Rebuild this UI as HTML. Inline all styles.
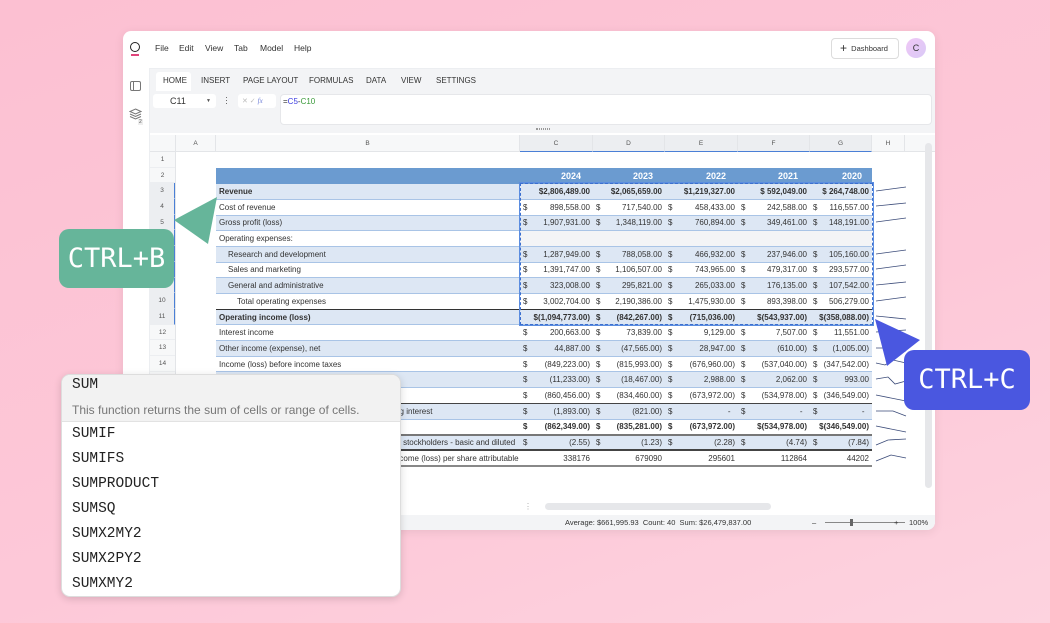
<!DOCTYPE html>
<html><head><meta charset="utf-8"><style>
*{box-sizing:border-box;margin:0;padding:0}
body{width:1050px;height:623px;overflow:hidden;background:linear-gradient(160deg,#fcc0d2 0%,#fdc8d8 60%,#fdd3df 100%);font-family:"Liberation Sans",sans-serif;position:relative;color:#333}
.abs{position:absolute}
.win{left:123px;top:31px;width:812px;height:499px;background:#fff;border-radius:8px;box-shadow:0 2px 10px rgba(0,0,0,.08);overflow:hidden}
.menu span{position:absolute;top:12px;font-size:8.5px;color:#333}
.ribbon{left:27px;top:37px;width:785px;height:65px;background:#f3f4f6;border-top:1px solid #eceef1}
.side{left:0;top:37px;width:27px;height:462px;background:#fff;border-right:1px solid #eceef1}
.tab{position:absolute;top:7px;font-size:8px;color:#333}
table{border-collapse:collapse;table-layout:fixed;font-size:8px}
td{height:15.7px;padding:0 3px;white-space:nowrap;overflow:hidden;border-bottom:1px solid #a9c4e6}
tr.b td{background:#dde7f4}
tr.w td{background:#fff}
.nm{display:flex;justify-content:space-between}
.bold td{font-weight:bold}
.rh div{height:15.7px;font-size:6.5px;color:#555;text-align:center;line-height:15.7px;border-bottom:1px solid #eceef1}
.ch{font-size:6.5px;color:#555;text-align:center;line-height:17px;position:absolute;top:0;height:17px;border-right:1px solid #e3e5e8}
.pop{left:61px;top:374px;width:340px;height:223px;background:#fff;border-radius:9px;box-shadow:0 2px 8px rgba(0,0,0,.15);border:1px solid #ddd;overflow:hidden}
.pop .it{position:absolute;left:10px;font-family:"Liberation Mono",monospace;font-size:14.5px;color:#222}
</style></head><body>
<div class="abs win">
  <div class="abs" style="left:7px;top:11px;width:10px;height:10px;border:1.6px solid #222;border-radius:50%"></div>
  <div class="abs" style="left:8px;top:23px;width:8px;height:1.5px;background:#e0457b"></div>
  <div class="menu"><span style="left:32px">File</span><span style="left:56px">Edit</span><span style="left:82px">View</span><span style="left:111px">Tab</span><span style="left:137px">Model</span><span style="left:171px">Help</span></div>
  <div class="abs" style="left:708px;top:7px;width:68px;height:21px;border:1px solid #dcdcdc;border-radius:4px;font-size:7.5px;line-height:19px;color:#333;padding-left:8px"><span style="font-size:12px;vertical-align:-1px">+</span>&nbsp; Dashboard</div>
  <div class="abs" style="left:783px;top:7px;width:20px;height:20px;border-radius:50%;background:linear-gradient(135deg,#f0c8f5,#d9c9f7);font-size:9px;text-align:center;line-height:20px;color:#333">C</div>
  <div class="abs side">
    <div class="abs" style="left:7px;top:13px;width:11px;height:10px;border:1.2px solid #777;border-radius:2px"></div>
    <div class="abs" style="left:10px;top:13px;width:1px;height:10px;background:#777"></div>
    <svg class="abs" style="left:6px;top:40px" width="13" height="13" viewBox="0 0 13 13" fill="none" stroke="#777" stroke-width="1"><path d="M6.5 1L12 3.5 6.5 6 1 3.5z"/><path d="M1 6l5.5 2.5L12 6"/><path d="M1 8.5l5.5 2.5L12 8.5"/></svg>
    <div class="abs" style="left:15px;top:51px;font-size:5px;color:#555;background:#eee;padding:0 1px">2</div>
  </div>
  <div class="abs ribbon">
    <div class="abs" style="left:6px;top:3px;width:35px;height:19px;background:#fff;border-radius:3px 3px 0 0"></div>
    <span class="tab" style="left:13px">HOME</span><span class="tab" style="left:51px">INSERT</span><span class="tab" style="left:93px">PAGE LAYOUT</span><span class="tab" style="left:159px">FORMULAS</span><span class="tab" style="left:216px">DATA</span><span class="tab" style="left:251px">VIEW</span><span class="tab" style="left:286px">SETTINGS</span>
    <div class="abs" style="left:3px;top:25px;width:63px;height:14px;background:#fff;border-radius:3px;font-size:9px;line-height:14px;padding-left:17px">C11<span style="position:absolute;left:53px;font-size:5px;color:#555">▼</span></div>
    <div class="abs" style="left:75px;top:27px;font-size:9px;color:#555;line-height:3px">·<br>·<br>·</div>
    <div class="abs" style="left:88px;top:25px;width:38px;height:14px;background:#fff;border-radius:3px;font-size:7px;line-height:14px;color:#bbb;padding-left:4px">✕ ✓ <i style="color:#6a7bd6;font-family:'Liberation Serif',serif">fx</i></div>
    <div class="abs" style="left:130px;top:25px;width:652px;height:31px;background:#fff;border-radius:4px;border:1px solid #e6e7ea;font-size:8px;padding:2px 0 0 2px">=<span style="color:#3a3ae0">C5</span>-<span style="color:#3a9a3a">C10</span></div>
    <div class="abs" style="left:386px;top:59px;width:14px;height:2px;border-top:1px dotted #999;border-bottom:1px dotted #999"></div>
  </div>
  <div class="abs" style="left:27px;top:104px;width:785px;height:17px;background:#f7f8f9;border-bottom:1px solid #e3e5e8">
    <div class="ch" style="left:0;width:26px"></div>
    <div class="ch" style="left:26px;width:40px">A</div>
    <div class="ch" style="left:66px;width:304px">B</div>
    <div class="ch" style="left:370px;width:73px;background:#eceef1;border-bottom:1.5px solid #4a7fd6">C</div>
    <div class="ch" style="left:443px;width:72px;background:#eceef1;border-bottom:1.5px solid #4a7fd6">D</div>
    <div class="ch" style="left:515px;width:73px;background:#eceef1;border-bottom:1.5px solid #4a7fd6">E</div>
    <div class="ch" style="left:588px;width:72px;background:#eceef1;border-bottom:1.5px solid #4a7fd6">F</div>
    <div class="ch" style="left:660px;width:62px;background:#eceef1;border-bottom:1.5px solid #4a7fd6">G</div>
    <div class="ch" style="left:722px;width:33px">H</div>
  </div>
  <div class="abs rh" style="left:27px;top:121px;width:26px;background:#f7f8f9;border-right:1px solid #e3e5e8;height:340px">
    <div>1</div><div>2</div><div style="background:#eceef1;border-right:1.5px solid #4a7fd6">3</div><div style="background:#eceef1;border-right:1.5px solid #4a7fd6">4</div><div style="background:#eceef1;border-right:1.5px solid #4a7fd6">5</div><div style="background:#eceef1;border-right:1.5px solid #4a7fd6">6</div><div style="background:#eceef1;border-right:1.5px solid #4a7fd6">7</div><div style="background:#eceef1;border-right:1.5px solid #4a7fd6">8</div><div style="background:#eceef1;border-right:1.5px solid #4a7fd6">9</div><div style="background:#eceef1;border-right:1.5px solid #4a7fd6">10</div><div style="background:#eceef1;border-right:1.5px solid #4a7fd6">11</div><div>12</div><div>13</div><div>14</div><div>15</div><div>16</div><div>17</div><div>18</div><div>19</div><div>20</div><div></div>
  </div>
  <div class="abs" style="left:802px;top:112px;width:7px;height:345px;background:#e6e7ea;border-radius:4px"></div>
  <div class="abs" style="left:422px;top:472px;width:226px;height:7px;background:#e6e7ea;border-radius:4px"></div>
  <div class="abs" style="left:401px;top:471px;font-size:8px;color:#aaa">⋮</div>
  <div class="abs" style="left:27px;top:484px;width:785px;height:15px;background:#f3f4f6;font-size:7.5px;line-height:15px;color:#333">
    <span class="abs" style="left:415px">Average: $661,995.93 &nbsp;Count: 40 &nbsp;Sum: $26,479,837.00</span>
    <span class="abs" style="left:662px">–</span>
    <div class="abs" style="left:675px;top:7px;width:80px;height:1px;background:#888"></div>
    <div class="abs" style="left:700px;top:4px;width:3px;height:7px;background:#666"></div>
    <span class="abs" style="left:744px">+</span><span class="abs" style="left:759px">100%</span>
  </div>
  <table class="abs" style="left:93px;top:137px;width:656px">
    <colgroup><col style="width:304px"><col style="width:73px"><col style="width:72px"><col style="width:73px"><col style="width:72px"><col style="width:62px"></colgroup>
    <tr style="background:#6b9bd0;color:#fff;font-weight:bold;font-size:9px"><td style="border:0"></td><td style="text-align:right;padding-right:12px;border:0">2024</td><td style="text-align:right;padding-right:12px;border:0">2023</td><td style="text-align:right;padding-right:12px;border:0">2022</td><td style="text-align:right;padding-right:12px;border:0">2021</td><td style="text-align:right;padding-right:10px;border:0">2020</td></tr>
    <tr class="b bold"><td>Revenue</td><td style="text-align:right">$2,806,489.00</td><td style="text-align:right">$2,065,659.00</td><td style="text-align:right">$1,219,327.00</td><td style="text-align:right">$ 592,049.00</td><td style="text-align:right">$ 264,748.00</td></tr>
    <tr class="w"><td>Cost of revenue</td><td><div class="nm"><span>$</span><span>898,558.00</span></div></td><td><div class="nm"><span>$</span><span>717,540.00</span></div></td><td><div class="nm"><span>$</span><span>458,433.00</span></div></td><td><div class="nm"><span>$</span><span>242,588.00</span></div></td><td><div class="nm"><span>$</span><span>116,557.00</span></div></td></tr>
    <tr class="b"><td>Gross profit (loss)</td><td><div class="nm"><span>$</span><span>1,907,931.00</span></div></td><td><div class="nm"><span>$</span><span>1,348,119.00</span></div></td><td><div class="nm"><span>$</span><span>760,894.00</span></div></td><td><div class="nm"><span>$</span><span>349,461.00</span></div></td><td><div class="nm"><span>$</span><span>148,191.00</span></div></td></tr>
    <tr class="w"><td>Operating expenses:</td><td style="background:#f3f4f6"></td><td style="background:#f3f4f6"></td><td style="background:#f3f4f6"></td><td style="background:#f3f4f6"></td><td style="background:#f3f4f6"></td></tr>
    <tr class="b"><td style="padding-left:12px">Research and development</td><td><div class="nm"><span>$</span><span>1,287,949.00</span></div></td><td><div class="nm"><span>$</span><span>788,058.00</span></div></td><td><div class="nm"><span>$</span><span>466,932.00</span></div></td><td><div class="nm"><span>$</span><span>237,946.00</span></div></td><td><div class="nm"><span>$</span><span>105,160.00</span></div></td></tr>
    <tr class="w"><td style="padding-left:12px">Sales and marketing</td><td><div class="nm"><span>$</span><span>1,391,747.00</span></div></td><td><div class="nm"><span>$</span><span>1,106,507.00</span></div></td><td><div class="nm"><span>$</span><span>743,965.00</span></div></td><td><div class="nm"><span>$</span><span>479,317.00</span></div></td><td><div class="nm"><span>$</span><span>293,577.00</span></div></td></tr>
    <tr class="b"><td style="padding-left:12px">General and administrative</td><td><div class="nm"><span>$</span><span>323,008.00</span></div></td><td><div class="nm"><span>$</span><span>295,821.00</span></div></td><td><div class="nm"><span>$</span><span>265,033.00</span></div></td><td><div class="nm"><span>$</span><span>176,135.00</span></div></td><td><div class="nm"><span>$</span><span>107,542.00</span></div></td></tr>
    <tr class="w"><td style="padding-left:21px;border-bottom:1.5px solid #333">Total operating expenses</td><td style="border-bottom:1.5px solid #333"><div class="nm"><span>$</span><span>3,002,704.00</span></div></td><td style="border-bottom:1.5px solid #333"><div class="nm"><span>$</span><span>2,190,386.00</span></div></td><td style="border-bottom:1.5px solid #333"><div class="nm"><span>$</span><span>1,475,930.00</span></div></td><td style="border-bottom:1.5px solid #333"><div class="nm"><span>$</span><span>893,398.00</span></div></td><td style="border-bottom:1.5px solid #333"><div class="nm"><span>$</span><span>506,279.00</span></div></td></tr>
    <tr class="b bold"><td>Operating income (loss)</td><td style="text-align:right">$(1,094,773.00)</td><td><div class="nm"><span>$</span><span>(842,267.00)</span></div></td><td><div class="nm"><span>$</span><span>(715,036.00)</span></div></td><td style="text-align:right">$(543,937.00)</td><td style="text-align:right">$(358,088.00)</td></tr>
    <tr class="w"><td>Interest income</td><td><div class="nm"><span>$</span><span>200,663.00</span></div></td><td><div class="nm"><span>$</span><span>73,839.00</span></div></td><td><div class="nm"><span>$</span><span>9,129.00</span></div></td><td><div class="nm"><span>$</span><span>7,507.00</span></div></td><td><div class="nm"><span>$</span><span>11,551.00</span></div></td></tr>
    <tr class="b"><td>Other income (expense), net</td><td><div class="nm"><span>$</span><span>44,887.00</span></div></td><td><div class="nm"><span>$</span><span>(47,565.00)</span></div></td><td><div class="nm"><span>$</span><span>28,947.00</span></div></td><td><div class="nm"><span>$</span><span>(610.00)</span></div></td><td><div class="nm"><span>$</span><span>(1,005.00)</span></div></td></tr>
    <tr class="w"><td>Income (loss) before income taxes</td><td><div class="nm"><span>$</span><span>(849,223.00)</span></div></td><td><div class="nm"><span>$</span><span>(815,993.00)</span></div></td><td><div class="nm"><span>$</span><span>(676,960.00)</span></div></td><td><div class="nm"><span>$</span><span>(537,040.00)</span></div></td><td><div class="nm"><span>$</span><span>(347,542.00)</span></div></td></tr>
    <tr class="b"><td>Provision for (benefit from) income taxes</td><td><div class="nm"><span>$</span><span>(11,233.00)</span></div></td><td><div class="nm"><span>$</span><span>(18,467.00)</span></div></td><td><div class="nm"><span>$</span><span>2,988.00</span></div></td><td><div class="nm"><span>$</span><span>2,062.00</span></div></td><td><div class="nm"><span>$</span><span>993.00</span></div></td></tr>
    <tr class="w"><td style="border-bottom:1.5px solid #444">Net income (loss)</td><td style="border-bottom:1.5px solid #444"><div class="nm"><span>$</span><span>(860,456.00)</span></div></td><td style="border-bottom:1.5px solid #444"><div class="nm"><span>$</span><span>(834,460.00)</span></div></td><td style="border-bottom:1.5px solid #444"><div class="nm"><span>$</span><span>(673,972.00)</span></div></td><td style="border-bottom:1.5px solid #444"><div class="nm"><span>$</span><span>(534,978.00)</span></div></td><td style="border-bottom:1.5px solid #444"><div class="nm"><span>$</span><span>(346,549.00)</span></div></td></tr>
    <tr class="b"><td>Less: net income (loss) attributable to noncontrolling interest</td><td><div class="nm"><span>$</span><span>(1,893.00)</span></div></td><td><div class="nm"><span>$</span><span>(821.00)</span></div></td><td><div class="nm"><span>$</span><span>-&nbsp;&nbsp;</span></div></td><td><div class="nm"><span>$</span><span>-&nbsp;&nbsp;</span></div></td><td><div class="nm"><span>$</span><span>-&nbsp;&nbsp;</span></div></td></tr>
    <tr class="w bold"><td style="font-weight:normal;border-bottom:2px solid #777">Net income (loss) attributable to the company, Inc.</td><td style="border-bottom:2px solid #777"><div class="nm"><span>$</span><span>(862,349.00)</span></div></td><td style="border-bottom:2px solid #777"><div class="nm"><span>$</span><span>(835,281.00)</span></div></td><td style="border-bottom:2px solid #777"><div class="nm"><span>$</span><span>(673,972.00)</span></div></td><td style="border-bottom:2px solid #777;text-align:right">$(534,978.00)</td><td style="border-bottom:2px solid #777;text-align:right">$(346,549.00)</td></tr>
    <tr class="b"><td style="border-bottom:2px solid #444">Net income (loss) per share attributable to common stockholders - basic and diluted</td><td style="border-bottom:2px solid #444"><div class="nm"><span>$</span><span>(2.55)</span></div></td><td style="border-bottom:2px solid #444"><div class="nm"><span>$</span><span>(1.23)</span></div></td><td style="border-bottom:2px solid #444"><div class="nm"><span>$</span><span>(2.28)</span></div></td><td style="border-bottom:2px solid #444"><div class="nm"><span>$</span><span>(4.74)</span></div></td><td style="border-bottom:2px solid #444"><div class="nm"><span>$</span><span>(7.84)</span></div></td></tr>
    <tr class="w"><td style="border-bottom:2px solid #888">Weighted-average shares used in computing net income (loss) per share attributable</td><td style="text-align:right;border-bottom:2px solid #888">338176</td><td style="text-align:right;border-bottom:2px solid #888">679090</td><td style="text-align:right;border-bottom:2px solid #888">295601</td><td style="text-align:right;border-bottom:2px solid #888">112864</td><td style="text-align:right;border-bottom:2px solid #888">44202</td></tr>
  </table>
  <div class="abs" style="left:397px;top:152px;width:353px;height:142px;border:1.5px dashed #3b6fd0;outline:1px solid #5b8de0"></div>
  <svg class="abs" style="left:750px;top:152px" width="40" height="285" fill="none" stroke="#3a4a78" stroke-width=".8">
    <path d="M3 8L33 4"/><path d="M3 23L33 20"/><path d="M3 39L33 35"/>
    <path d="M3 71L33 67"/><path d="M3 86L33 82"/><path d="M3 102L33 99"/><path d="M3 118L33 114"/>
    <path d="M3 133L33 136"/><path d="M3 149L33 147"/><path d="M3 165L20 165 33 168"/><path d="M3 180L12 182 20 177 33 180"/>
    <path d="M3 196L15 194 22 201 33 198"/><path d="M3 212L33 218"/><path d="M3 228L20 228 33 233"/><path d="M3 243L33 249"/>
    <path d="M3 262L15 257 33 256"/><path d="M3 278L18 272 33 275"/>
  </svg>
</div>

<svg class="abs" style="left:170px;top:194px" width="50" height="54"><polygon points="4,26 47,3 38,50" fill="#66b59a"/></svg>
<div class="abs" style="left:59px;top:229px;width:115px;height:59px;background:#66b59a;border-radius:10px;color:#fff;font-family:'DejaVu Sans Mono','Liberation Mono',monospace;font-size:27px;line-height:59px;text-align:center">CTRL+B</div>

<svg class="abs" style="left:870px;top:314px" width="55" height="60"><polygon points="5,5 50,26 17,52" fill="#4a57e0"/></svg>
<div class="abs" style="left:904px;top:350px;width:126px;height:60px;background:#4a57e0;border-radius:10px;color:#fff;font-family:'DejaVu Sans Mono','Liberation Mono',monospace;font-size:27px;line-height:60px;text-align:center">CTRL+C</div>

<div class="abs pop">
  <div class="abs" style="left:0;top:0;width:340px;height:47px;background:#f2f2f2;border-bottom:1px solid #e2e2e2"></div>
  <div class="it" style="top:2px">SUM</div>
  <div class="abs" style="left:10px;top:28px;font-size:12px;color:#777">This function returns the sum of cells or range of cells.</div>
  <div class="it" style="top:51px">SUMIF</div>
  <div class="it" style="top:76px">SUMIFS</div>
  <div class="it" style="top:101px">SUMPRODUCT</div>
  <div class="it" style="top:126px">SUMSQ</div>
  <div class="it" style="top:151px">SUMX2MY2</div>
  <div class="it" style="top:176px">SUMX2PY2</div>
  <div class="it" style="top:201px">SUMXMY2</div>
</div>
</body></html>
